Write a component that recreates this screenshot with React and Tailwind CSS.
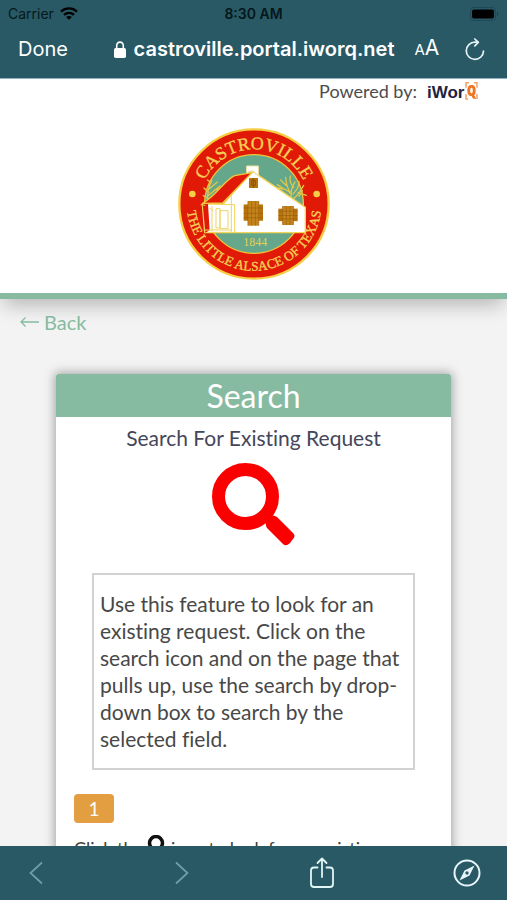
import React from "react";

function WifiIcon() {
  return (
    <svg viewBox="0 0 18 13" className="h-[13px] w-[18px]" fill="none" stroke="#000" strokeWidth="2.3" aria-hidden="true">
      <path d="M1 4.6C5.5.4 12.500.4 17 4.600" />
      <path d="M4 7.900C7 5.300 11 5.300 14 7.900" />
      <path d="M9 12.800 6.100 9.900C7.700 8.600 10.300 8.600 11.900 9.900Z" fill="#000" stroke="none" />
    </svg>
  );
}

function BatteryIcon() {
  return (
    <svg viewBox="0 0 29 14" className="h-[14px] w-[29px]" aria-hidden="true">
      <rect x="0.500" y="0.500" width="25" height="13" rx="3.500" fill="none" stroke="#1d4a55" />
      <rect x="2" y="2.500" width="22" height="9" rx="2" fill="#000" />
      <path d="M27 5v4c1.500-.6 1.500-3.400 0-4Z" fill="#16404a" />
    </svg>
  );
}

function LockIcon() {
  return (
    <svg viewBox="0 0 12 17" className="h-[17px] w-3" aria-hidden="true">
      <rect y="7" width="12" height="10" rx="1.800" fill="#fff" />
      <path d="M2.700 8V4.700a3.300 3.600 0 0 1 6.600 0V8" fill="none" stroke="#fff" strokeWidth="1.600" />
    </svg>
  );
}

function ReloadIcon() {
  return (
    <svg viewBox="0 0 20 23" className="h-[23px] w-5" fill="none" stroke="#e6f3f7" strokeWidth="1.700" strokeLinecap="round" strokeLinejoin="round" aria-hidden="true">
      <path d="M18.500 13a8.600 8.600 0 1 1-8.500-8.800l3 .1" />
      <path d="m9.800 1 3.500 3.400-3.500 3.400" />
    </svg>
  );
}

function IworqLogo() {
  return (
    <svg viewBox="0 0 52 20" className="h-5 w-[52px]" role="img" aria-label="iWorQ">
      <text x="0" y="17" fontWeight="700" fontSize="17" fill="#1d2340" className="[font-family:'Liberation_Sans',sans-serif]">iWor</text>
      <path d="M42 1.700h-3v5M47 1.700h3v5M39 13v5h2M50 13v5" fill="none" stroke="#f3a36b" strokeWidth="1.500" />
      <path fillRule="evenodd" d="M44.500 4c3 0 4.200 2 4.200 5.500 0 2.300-.5 3.900-1.500 4.700l2 3.600h-3l-1.700-2.800c-3 0-4.200-2-4.200-5.500s1.200-5.500 4.200-5.500Zm0 2.700c-1 0-1.300 1-1.300 2.800s.3 2.800 1.300 2.800 1.300-1 1.300-2.800-.3-2.800-1.300-2.800Z" fill="#ef7622" />
    </svg>
  );
}

function WindowShutters({ x, y, w, h }) {
  return (
    <g transform={`translate(${x} ${y})`}>
      <rect y={h * 0.14} width={w} height={h * 0.66} fill="#b8730d" />
      <rect x={w * 0.22} width={w * 0.56} height={h} fill="#c5841a" />
      <g stroke="#9a5f10" strokeWidth="2" fill="none">
        <path d={`M${w * 0.22} 0V${h}M${w * 0.41} 0V${h}M${w * 0.6} 0V${h}M${w * 0.78} 0V${h}`} />
        <path d={`M0 ${h * 0.28}H${w}M0 ${h * 0.5}H${w}M0 ${h * 0.68}H${w}`} />
      </g>
    </g>
  );
}

function CitySeal() {
  return (
    <svg viewBox="24 24 456 456" className="size-[152px]" role="img" aria-label="Castroville, the Little Alsace of Texas, 1844">
      <defs>
        <path id="seal-top" d="M88 252a164 164 0 0 1 328 0" />
        <path id="seal-bottom" d="M51 230a202 202 0 1 0 402 0" />
      </defs>
      <circle cx="252" cy="252" r="224" fill="#e11a08" stroke="#f7cf45" strokeWidth="7" />
      <circle cx="252" cy="252" r="148" fill="#65a78b" stroke="#f0c63b" strokeWidth="4" />
      <g fill="none" stroke="#dfc64b" strokeWidth="4" strokeLinecap="round">
        <path d="M365 246c-4-24-2-44 10-60M364 224c-8-16-24-18-45-20M360 216c-10-14-12-28-13-44M371 202c-10-10-13-20-10-34M369 222c10-12 18-20 18-38M370 236c13-8 20-20 31-40M340 206l-18-12M348 196l-16-16M384 218l25 8M352 231l-34-2M387 229l10-17" />
        <path d="M113 246c-2-26 2-40 12-66M116 218l-14-14M118 206l24-20M116 226l34-28M115 236l-15-9M124 188l-12-8M134 210l16-4" />
      </g>
      <path d="M160 252 246 153l160 109v76H104l-7-87Z" fill="#fff" stroke="#f3d458" strokeWidth="4" strokeLinejoin="round" />
      <path d="m104 252 90 2v83h-88Z" fill="#fff" stroke="#f3d458" strokeWidth="3" />
      <path d="m98 251 16 0 5 80-13 7Z" fill="#e11a08" />
      <path d="M98 250C140 226 160 184 194 167L246 158 158 249Z" fill="#e11a08" stroke="#f0c63b" strokeWidth="4" strokeLinejoin="round" />
      <path d="M230 158v-20h35v29l-17-15Z" fill="#fff" stroke="#f3e2a0" strokeWidth="3" />
      <g fill="none" stroke="#ecd569" strokeWidth="3">
        <path d="M184 226v110M126 258v76M104 330h80M138 266h12v58h-12zM150 272h24v54h-24zM130 274l-10-10M92 254l14 2" />
      </g>
      <rect x="237" y="174" width="27" height="30" fill="#b8730d" />
      <path d="M245 181h11v15h-11zM250 174v30" fill="none" stroke="#8b520b" strokeWidth="3" />
      <WindowShutters x={221} y={243} w={58} h={74} />
      <WindowShutters x={325} y={258} w={58} h={57} />
      <circle cx="67" cy="222" r="10" fill="#f5cf45" />
      <circle cx="440" cy="222" r="10" fill="#f5cf45" />
      <g fill="#f5cf55" textAnchor="middle" className="[font-family:'Liberation_Serif',serif]">
        <text fontSize="54" stroke="#f5cf55" strokeWidth="1"><textPath href="#seal-top" startOffset="50%">CASTROVILLE</textPath></text>
        <text fontSize="40" stroke="#f5cf55" strokeWidth="1"><textPath href="#seal-bottom" startOffset="50%">THE LITTLE ALSACE OF TEXAS</textPath></text>
        <text x="256" y="378" fontSize="36" fill="#e2cf55">1844</text>
      </g>
    </svg>
  );
}

function BrowserTop() {
  return (
    <header className="shrink-0 border-b border-[#8fb3c4] bg-[#285965] px-2 [font-family:Inter,sans-serif]">
      <div className="grid h-[27px] grid-cols-3 items-center text-[14px] text-[#06171b]">
        <div className="flex items-center gap-1.5"><span>Carrier</span><WifiIcon /></div>
        <div className="text-center font-semibold">8:30 AM</div>
        <div className="flex justify-end"><BatteryIcon /></div>
      </div>
      <div className="flex h-[51px] items-start justify-between pr-3.5 pl-2.5 text-white">
        <button className="h-11 text-[20px]">Done</button>
        <div className="flex h-11 items-center gap-2 pl-5">
          <LockIcon />
          <span className="text-[20px] font-semibold">castroville.portal.iworq.net</span>
          <button aria-label="Text size" className="ml-3 leading-6"><span className="text-[15px]">A</span><span className="text-[21px]">A</span></button>
        </div>
        <button aria-label="Reload" className="flex h-11 items-center"><ReloadIcon /></button>
      </div>
    </header>
  );
}

function BrowserBottom() {
  return (
    <nav aria-label="Browser" className="flex h-[54px] shrink-0 items-center justify-between bg-[#285965] px-[26px]">
      <button aria-label="Previous page" className="w-7">
        <svg viewBox="0 0 20 24" className="h-6 w-5" fill="none" stroke="#6e9fae" strokeWidth="1.700"><path d="M16 1.500 4.500 12 16 22.500" /></svg>
      </button>
      <button aria-label="Next page">
        <svg viewBox="0 0 20 24" className="h-6 w-5" fill="none" stroke="#6e9fae" strokeWidth="1.700"><path d="M4 1.500 15.500 12 4 22.500" /></svg>
      </button>
      <button aria-label="Share">
        <svg viewBox="0 0 26 32" className="h-8 w-[26px]" fill="none" stroke="#e2f6f6" strokeWidth="1.800" strokeLinecap="round" strokeLinejoin="round">
          <path d="M8.500 10.500H5A3 3 0 0 0 2 13.500V27a3 3 0 0 0 3 3h16a3 3 0 0 0 3-3V13.500a3 3 0 0 0-3-3h-3.500M13 20V2M8.500 6 13 1.500 17.500 6" />
        </svg>
      </button>
      <button aria-label="Open in browser">
        <svg viewBox="0 0 28 28" className="size-7" aria-hidden="true">
          <circle cx="14" cy="14" r="12.500" fill="none" stroke="#e8f6fb" strokeWidth="2" />
          <path fillRule="evenodd" d="M21.500 6.500 16.500 16.500 6.500 21.500 11.500 11.500ZM14 12.300a1.700 1.700 0 1 0 0 3.400 1.700 1.700 0 0 0 0-3.400Z" fill="#e8f6fb" />
        </svg>
      </button>
    </nav>
  );
}

function SearchCard() {
  return (
    <section className="mx-14 bg-white text-center shadow-[0_0_10px_1px_rgba(0,0,0,0.35)]">
      <h1 className="rounded-t-xs bg-[#86bba1] text-[32px] leading-[43px] text-white">Search</h1>
      <h2 className="pt-[7px] text-[21px] leading-[27px] text-[#45465a]">Search For Existing Request</h2>
      <button aria-label="Search for existing request" className="mx-auto mt-3 block">
        <svg viewBox="0 0 83 83" className="size-[83px]" aria-hidden="true">
          <circle cx="33.500" cy="33.500" r="27" fill="none" stroke="#fb0000" strokeWidth="13" />
          <path d="m54 58 3-4q4-3 8 0l16 16q3 3 0 6l-3 4q-4 4-7 1L55 65q-2-3-1-7Z" fill="#fb0000" />
        </svg>
      </button>
      <p className="mx-9 mt-[27px] border-2 border-[#d2d2d2] px-1.5 pt-[15px] pb-4 text-left text-[21px] leading-[27px] text-[#484848]">
        Use this feature to look for an existing request. Click on the search icon and on the page that pulls up, use the search by drop-down box to search by the selected field.
      </p>
      <div className="px-[18px] pt-6 text-left">
        <span className="inline-block w-10 rounded bg-[#e29e40] pt-px text-center text-[19px] leading-7 text-white">1</span>
        <p className="mt-3 flex text-[18px] leading-[27px] text-[#404040]">
          Click the
          <svg viewBox="0 0 20 20" className="mx-1 size-5" fill="none" stroke="#111" aria-hidden="true">
            <circle cx="9" cy="8" r="6.500" strokeWidth="3.500" /><path d="m14 14 5 5" strokeWidth="4" />
          </svg>
          icon to look for an existing
        </p>
      </div>
    </section>
  );
}

export default function App() {
  return (
    <div className="flex h-screen flex-col overflow-hidden bg-[#f3f3f3] [font-family:Lato,sans-serif] [font-variant-ligatures:no-common-ligatures]">
      <BrowserTop />
      <main className="min-h-0 flex-1 overflow-hidden">
        <div className="border-b-6 border-[#86bba1] bg-white shadow-[0_10px_18px_-4px_rgba(0,0,0,0.25)]">
          <div className="flex items-center justify-end gap-2.5 pr-7 text-[18px] leading-6 text-[#4c4c4c]">
            <span>Powered by:</span><IworqLogo />
          </div>
          <div className="flex justify-center pt-[25px] pb-[13px]"><CitySeal /></div>
        </div>
        <a href="#back" className="ml-5 mt-[9px] mb-[38px] flex w-fit items-center gap-1 text-[20px] leading-7 text-[#86bba1]">
          <svg viewBox="0 0 20 12" className="h-3 w-5" fill="none" stroke="currentColor" strokeWidth="1.300" aria-hidden="true"><path d="M19 6H1M5.500 1.500 1 6l4.500 4.500" /></svg>
          Back
        </a>
        <SearchCard />
      </main>
      <BrowserBottom />
    </div>
  );
}
